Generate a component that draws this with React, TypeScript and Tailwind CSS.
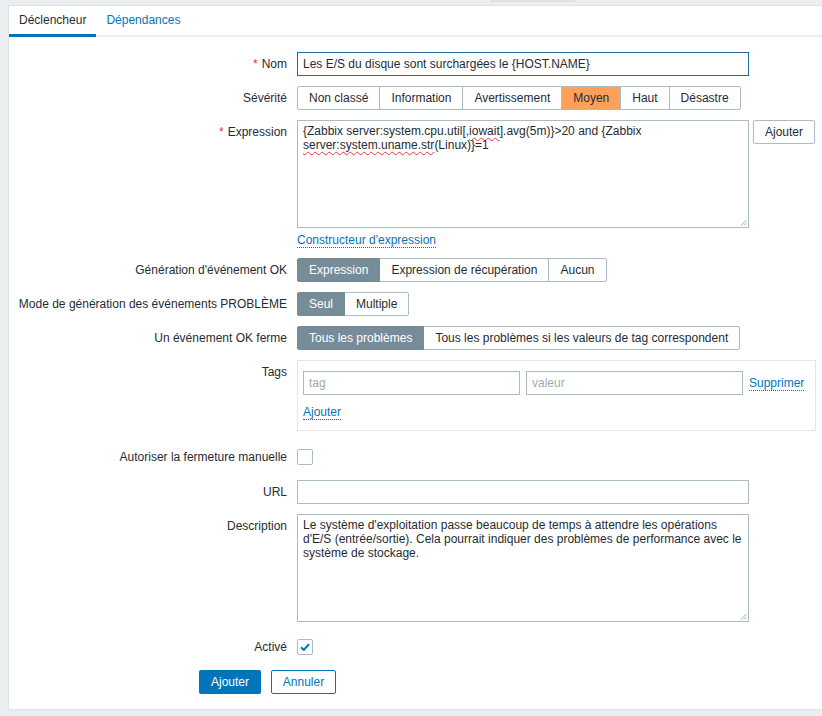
import React from "react";

function Label({ children, required }: { children: React.ReactNode; required?: boolean }) {
  return (
    <div className="w-[278px] shrink-0 text-right leading-[24px] text-[12px] text-[#1f2c33] whitespace-nowrap">
      {required && <span className="text-[#e33734] mr-[4px]">*</span>}
      {children}
    </div>
  );
}

function Seg({ items, active, variant }: { items: string[]; active: number; variant: "sev" | "radio" }) {
  return (
    <div className="flex h-[24px]">
      {items.map((t, i) => {
        const isActive = i === active;
        const first = i === 0;
        const last = i === items.length - 1;
        let cls = "h-[24px] px-[11px] leading-[22px] text-[12px] whitespace-nowrap border ";
        cls += first ? "rounded-l-[2px] " : "-ml-px ";
        if (last) cls += "rounded-r-[2px] ";
        if (isActive && variant === "radio") cls += "bg-[#768d99] border-[#768d99] text-white relative z-10";
        else if (isActive && variant === "sev") cls += "bg-[#ffa059] border-[#acbbc2] text-[#1f2c33]";
        else cls += "bg-white border-[#acbbc2] text-[#1f2c33]";
        return (
          <div key={t} className={cls}>
            {t}
          </div>
        );
      })}
    </div>
  );
}

function Grip() {
  return (
    <svg className="absolute right-[1px] bottom-[1px]" width="7" height="7" viewBox="0 0 7 7">
      <line x1="6.5" y1="1" x2="1" y2="6.5" stroke="#8a9399" strokeWidth="0.8" />
      <line x1="6.5" y1="4" x2="4" y2="6.5" stroke="#8a9399" strokeWidth="0.8" />
    </svg>
  );
}

const spell = "underline decoration-wavy decoration-[#e0393e] decoration-[1px] underline-offset-[2px]";
const link = "leading-[14px] text-[#0275b8] border-b border-dotted border-[#0275b8]";

export default function App() {
  return (
    <div className="w-[822px] h-[716px] bg-[#ebeef0] overflow-hidden pl-[8px] font-['Liberation_Sans',Arial,sans-serif] text-[12px] text-[#1f2c33]">
      <div className="h-[5px]">
        <div className="ml-[482px] w-[85px] h-[2px] bg-[#dde2e5]" />
      </div>
      <div className="h-[705px] bg-white border-l border-t border-b border-[#dfe4e7]">
        {/* Tabs */}
        <div className="h-[31px] border-b-2 border-[#ebeef0] flex">
          <div className="h-[31px] border-b-[3px] border-[#0275b8] px-[10px] leading-[28px] text-[#1f2c33] -mb-[2px]">
            Déclencheur
          </div>
          <div className="pl-[10px] leading-[28px] text-[#0275b8]">Dépendances</div>
        </div>

        {/* Nom */}
        <div className="flex mt-[15px]">
          <Label required>Nom</Label>
          <div className="ml-[10px]">
            <div className="w-[452px] h-[24px] border border-[#236b9a] px-[5px] leading-[22px] whitespace-nowrap">
              Les E/S du disque sont surchargées le {"{HOST.NAME}"}
            </div>
          </div>
        </div>

        {/* Sévérité */}
        <div className="flex mt-[10px]">
          <Label>Sévérité</Label>
          <div className="ml-[10px]">
            <Seg
              variant="sev"
              active={3}
              items={["Non classé", "Information", "Avertissement", "Moyen", "Haut", "Désastre"]}
            />
          </div>
        </div>

        {/* Expression */}
        <div className="flex mt-[10px]">
          <Label required>Expression</Label>
          <div className="ml-[10px]">
            <div className="flex items-start">
              <div className="relative w-[452px] h-[108px] border border-[#acbbc2] px-[5px] py-[3px] leading-[14px]">
                {"{Zabbix server:system.cpu.util[,"}
                <span className={spell}>iowait</span>
                {"].avg(5m)}>20 and {Zabbix"}
                <br />
                <span className={spell}>server:system.uname.str</span>
                {"(Linux)}=1"}
                <Grip />
              </div>
              <div className="ml-[4px] h-[24px] px-[11px] border border-[#acbbc2] rounded-[2px] leading-[22px] bg-white">
                Ajouter
              </div>
            </div>
            <div className="mt-[5px] flex">
              <span className={link}>Constructeur d'expression</span>
            </div>
          </div>
        </div>

        {/* Génération d'événement OK */}
        <div className="flex mt-[10px]">
          <Label>Génération d'événement OK</Label>
          <div className="ml-[10px]">
            <Seg variant="radio" active={0} items={["Expression", "Expression de récupération", "Aucun"]} />
          </div>
        </div>

        {/* Mode */}
        <div className="flex mt-[10px]">
          <Label>Mode de génération des événements PROBLÈME</Label>
          <div className="ml-[10px]">
            <Seg variant="radio" active={0} items={["Seul", "Multiple"]} />
          </div>
        </div>

        {/* OK ferme */}
        <div className="flex mt-[10px]">
          <Label>Un événement OK ferme</Label>
          <div className="ml-[10px]">
            <Seg
              variant="radio"
              active={0}
              items={["Tous les problèmes", "Tous les problèmes si les valeurs de tag correspondent"]}
            />
          </div>
        </div>

        {/* Tags */}
        <div className="flex mt-[10px]">
          <Label>Tags</Label>
          <div className="ml-[10px]">
            <div className="w-[519px] h-[71px] border border-[#e3e7ea] px-[5px] pt-[10px]">
              <div className="flex items-center gap-[6px]">
                <div className="w-[217px] h-[24px] border border-[#acbbc2] px-[5px] leading-[22px] text-[#a3abb0]">
                  tag
                </div>
                <div className="w-[217px] h-[24px] border border-[#acbbc2] px-[5px] leading-[22px] text-[#a3abb0]">
                  valeur
                </div>
                <span className={link}>Supprimer</span>
              </div>
              <div className="mt-[10px] flex">
                <span className={link}>Ajouter</span>
              </div>
            </div>
          </div>
        </div>

        {/* Autoriser */}
        <div className="flex mt-[14px]">
          <Label>Autoriser la fermeture manuelle</Label>
          <div className="ml-[10px] h-[24px] flex items-center">
            <div className="w-[16px] h-[16px] border border-[#acbbc2] rounded-[2px] bg-white" />
          </div>
        </div>

        {/* URL */}
        <div className="flex mt-[11px]">
          <Label>URL</Label>
          <div className="ml-[10px]">
            <div className="w-[452px] h-[24px] border border-[#acbbc2]" />
          </div>
        </div>

        {/* Description */}
        <div className="flex mt-[10px]">
          <Label>Description</Label>
          <div className="ml-[10px]">
            <div className="relative w-[452px] h-[108px] border border-[#acbbc2] px-[5px] py-[3px] leading-[14px]">
              Le système d'exploitation passe beaucoup de temps à attendre les opérations
              <br />
              d'E/S (entrée/sortie). Cela pourrait indiquer des problèmes de performance avec le
              <br />
              système de stockage.
              <Grip />
            </div>
          </div>
        </div>

        {/* Activé */}
        <div className="flex mt-[13px]">
          <Label>Activé</Label>
          <div className="ml-[10px] h-[24px] flex items-center">
            <div className="w-[16px] h-[16px] border border-[#acbbc2] rounded-[2px] bg-white flex items-center justify-center">
              <svg width="10" height="8" viewBox="0 0 10 8">
                <path d="M1 4.2 L3.8 7 L9 1.2" fill="none" stroke="#0275b8" strokeWidth="2" />
              </svg>
            </div>
          </div>
        </div>

        {/* Buttons */}
        <div className="flex gap-[10px] mt-[11px] ml-[190px]">
          <div className="h-[24px] w-[62px] text-center leading-[24px] bg-[#0275b8] text-white rounded-[2px]">
            Ajouter
          </div>
          <div className="h-[24px] w-[65px] text-center leading-[22px] border border-[#0275b8] text-[#0275b8] rounded-[2px] bg-white">
            Annuler
          </div>
        </div>
      </div>
    </div>
  );
}
